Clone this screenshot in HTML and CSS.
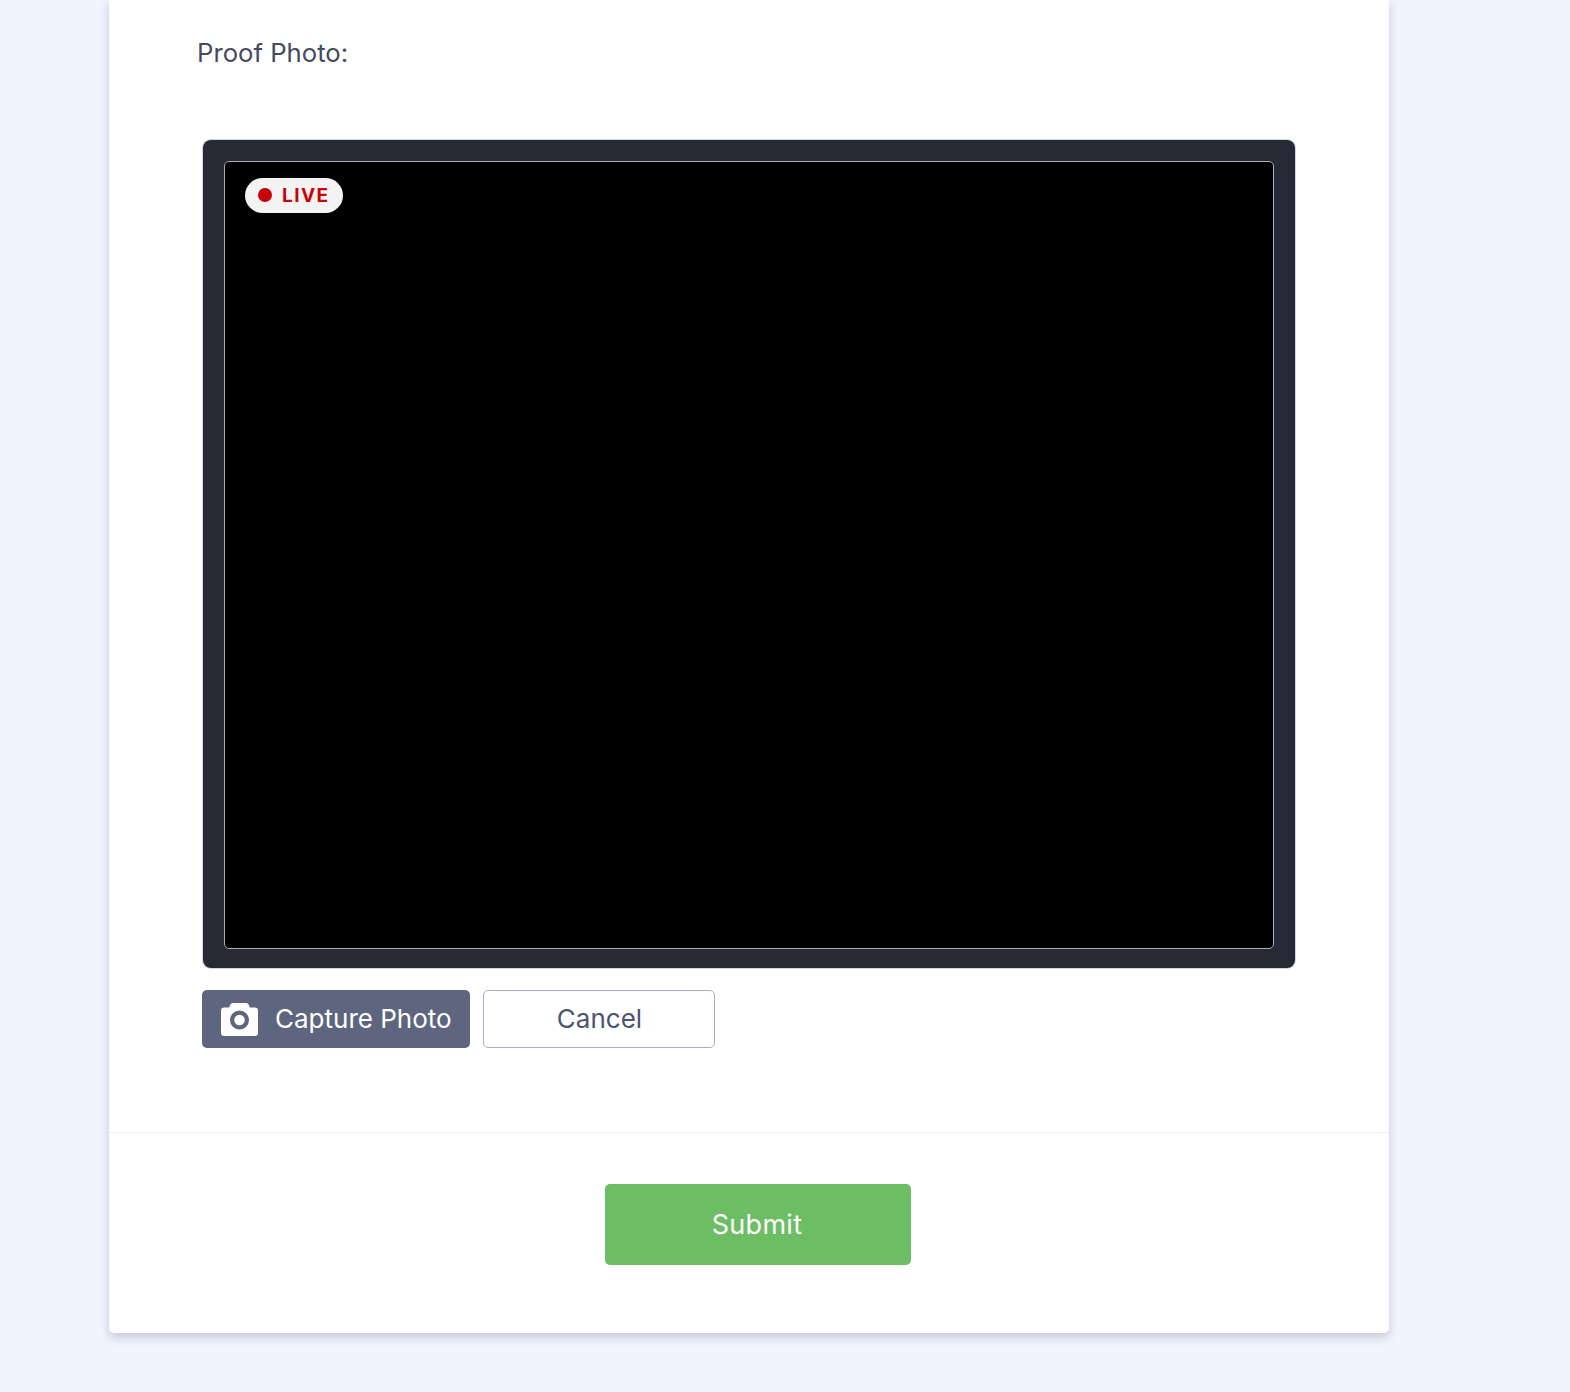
FILE: index.html
```html
<!DOCTYPE html>
<html>
<head>
<meta charset="UTF-8">
<title>Proof Photo</title>
<link rel="stylesheet" href="styles.css">
</head>
<body>
<div class="card">
  <div class="card-body">
    <div class="field-label">Proof Photo:</div>
    <div class="camera">
      <div class="video">
        <div class="live-badge"><span class="live-dot"></span>LIVE</div>
      </div>
    </div>
    <div class="camera-actions">
      <button class="btn btn-capture" type="button">
        <svg class="camera-icon" viewBox="0 0 37 33" width="37" height="33">
          <path fill="#fff" fill-rule="evenodd" d="M8 4.500 L9.500 1.500 C10 0.500 11 0 12 0 H25 C26 0 27 0.500 27.500 1.500 L29 4.500 H34 C35.700 4.500 37 5.800 37 7.500 V30 C37 31.700 35.700 33 34 33 H3 C1.300 33 0 31.700 0 30 V7.500 C0 5.800 1.300 4.500 3 4.500 Z M18.500 7.500 A9.500 9.500 0 1 0 18.500 26.500 A9.500 9.500 0 1 0 18.500 7.500 Z M18.500 11.700 A5.300 5.300 0 1 1 18.500 22.300 A5.300 5.300 0 1 1 18.500 11.700 Z"/>
        </svg>
        <span class="btn-text">Capture Photo</span>
      </button>
      <button class="btn btn-cancel" type="button"><span class="btn-text">Cancel</span></button>
    </div>
  </div>
  <div class="card-footer">
    <button class="btn btn-submit" type="button">Submit</button>
  </div>
</div>
</body>
</html>
```

FILE: styles.css
```css
html, body {
  margin: 0;
  padding: 0;
}
body {
  height: 1392px;
  overflow: hidden;
  background-color: #f3f3fd;
  font-family: Inter, "Liberation Sans", sans-serif;
}
.card {
  box-sizing: border-box;
  width: 1280px;
  margin-left: 109px;
  background-color: #fff;
  border-radius: 0 0 5px 5px;
  box-shadow: 0 4px 10px rgba(80, 80, 130, 0.28);
}
.card-body {
  box-sizing: border-box;
  height: 1133px;
  padding: 38px 93px 0 88px;
  border-bottom: 1px solid #ebebf1;
}
.field-label {
  font-size: 25.700px;
  line-height: 30px;
  color: #454a5e;
}
.camera {
  box-sizing: border-box;
  width: 1092px;
  height: 828px;
  margin: 72px 0 0 6px;
  padding: 21px 21px 19px;
  background-color: #272935;
  border-radius: 8px;
  box-shadow: 0 0 0 1px #d4d4e8;
}
.video {
  box-sizing: border-box;
  height: 788px;
  padding: 16px 20px;
  background-color: #000;
  border: 1px solid #a9abb8;
  border-radius: 5px;
}
.live-badge {
  display: inline-flex;
  align-items: center;
  gap: 10px;
  height: 35px;
  padding: 0 13px;
  background-color: #f3f3f3;
  border-radius: 18px;
  color: #c70408;
  font-size: 19px;
  font-weight: 700;
  letter-spacing: 1.450px;
}
.live-dot {
  width: 14px;
  height: 14px;
  margin-top: -1px;
  background-color: #c70408;
  border-radius: 50%;
}
.camera-actions {
  display: flex;
  gap: 13px;
  margin: 22px 0 0 5px;
}
.btn {
  box-sizing: border-box;
  border-radius: 5px;
  font-family: Inter, "Liberation Sans", sans-serif;
  font-size: 26px;
  cursor: pointer;
}
.btn-text {
  position: relative;
  top: -1px;
}
.btn-capture {
  display: flex;
  align-items: center;
  gap: 17px;
  width: 268px;
  height: 58px;
  padding: 0 0 0 19px;
  background-color: #5e657f;
  border: 0;
  color: #fff;
}
.camera-icon {
  flex: none;
}
.btn-cancel {
  width: 232px;
  height: 58px;
  padding: 0 0 0 1px;
  background-color: #fff;
  border: 1px solid #acacd2;
  color: #4b546f;
}
.card-footer {
  display: flex;
  height: 200px;
  padding: 51px 0 0 496px;
  box-sizing: border-box;
}
.btn-submit {
  width: 306px;
  height: 81px;
  padding: 0 2px 0 0;
  background-color: #6dbd65;
  border: 0;
  color: #fff;
  font-size: 27px;
  letter-spacing: 0.3px;
}
```
